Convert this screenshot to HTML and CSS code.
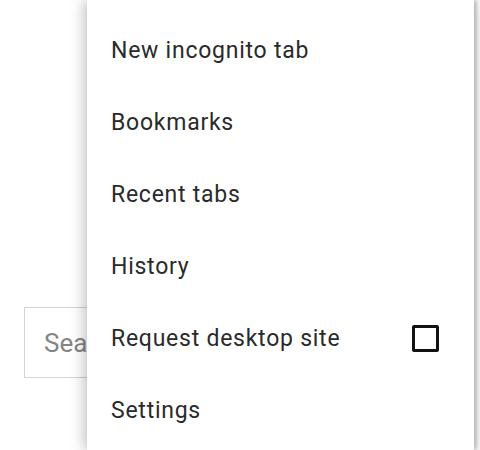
FILE: index.html
```html
<!DOCTYPE html>
<html>
<head>
<meta charset="utf-8">
<link rel="stylesheet" href="styles.css">
</head>
<body>
<div class="page">
  <div class="search">Search</div>
</div>
<div class="menu">
  <div class="item">New incognito tab</div>
  <div class="item">Bookmarks</div>
  <div class="item">Recent tabs</div>
  <div class="item">History</div>
  <div class="item">Request desktop site<span class="check"></span></div>
  <div class="item">Settings</div>
</div>
</body>
</html>
```
FILE: styles.css
```css
html, body {
  margin: 0;
  padding: 0;
  background: #fff;
  width: 480px;
  height: 450px;
  overflow: hidden;
  font-family: Roboto, "Liberation Sans", sans-serif;
}
.page {
  padding: 307px 0 0 24px;
}
.search {
  width: 300px;
  height: 69px;
  border: 1px solid #d4d4d4;
  display: flex;
  align-items: center;
  padding-left: 19px;
  font-size: 26px;
  color: #858585;
}
.menu {
  position: absolute;
  left: 87px;
  top: 0;
  width: 387px;
  height: 436px;
  padding-top: 14px;
  background: #fff;
  box-shadow: -2px 0 14px rgba(0,0,0,0.28), 3px 0 4px rgba(0,0,0,0.2);
}
.item {
  height: 72px;
  display: flex;
  align-items: center;
  padding-left: 24px;
  padding-right: 35px;
  font-size: 23px;
  color: #2a2a2a;
  letter-spacing: 0.75px;
}
.check {
  margin-left: auto;
  width: 21px;
  height: 21px;
  border: 3px solid #111;
  border-radius: 2px;
}
```
